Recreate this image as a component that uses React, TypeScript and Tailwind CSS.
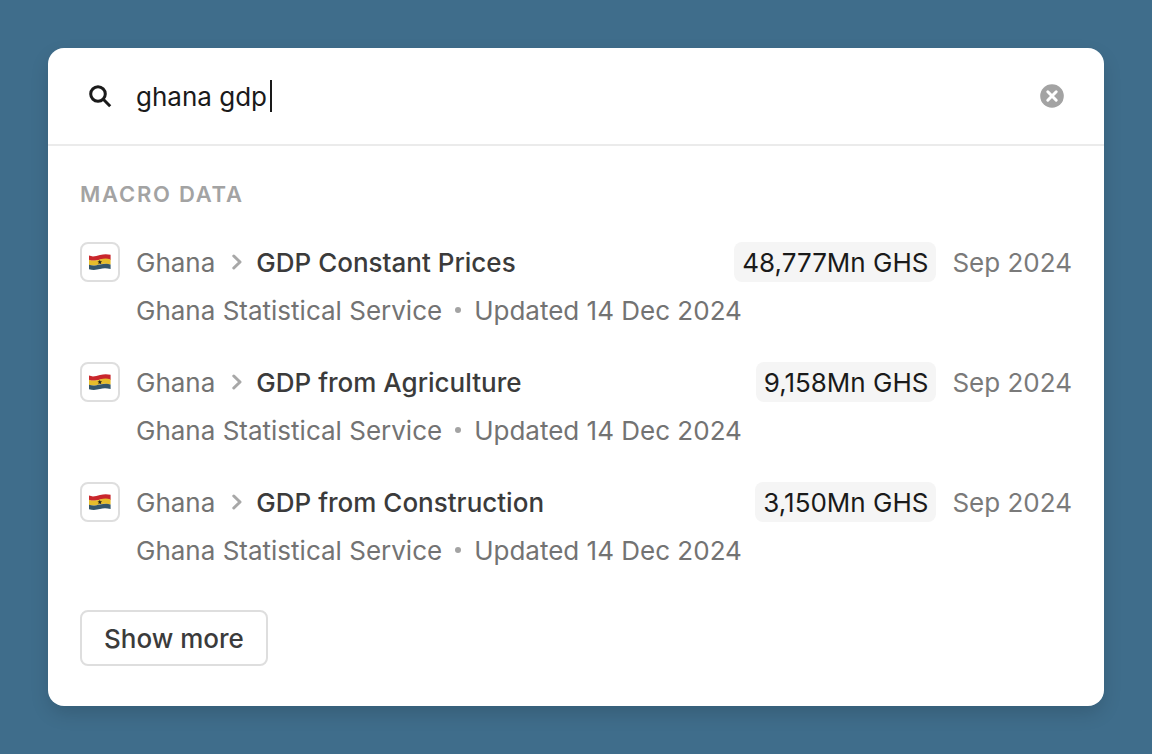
import { useState } from 'react';

interface MacroSeries {
  id: string;
  country: string;
  name: string;
  value: string;
  period: string;
  source: string;
  updated: string;
}

const series: MacroSeries[] = [
  {
    id: 'constant-prices',
    country: 'Ghana',
    name: 'GDP Constant Prices',
    value: '48,777Mn GHS',
    period: 'Sep 2024',
    source: 'Ghana Statistical Service',
    updated: 'Updated 14 Dec 2024'
  },
  {
    id: 'agriculture',
    country: 'Ghana',
    name: 'GDP from Agriculture',
    value: '9,158Mn GHS',
    period: 'Sep 2024',
    source: 'Ghana Statistical Service',
    updated: 'Updated 14 Dec 2024'
  },
  {
    id: 'construction',
    country: 'Ghana',
    name: 'GDP from Construction',
    value: '3,150Mn GHS',
    period: 'Sep 2024',
    source: 'Ghana Statistical Service',
    updated: 'Updated 14 Dec 2024'
  }
];

function SearchIcon() {
  return (
    <svg className="size-6 shrink-0" viewBox="0 0 24 24" fill="none" stroke="#1a1a1a" strokeWidth="3" role="img" aria-label="Search">
      <circle cx="10" cy="10" r="7.3" />
      <path d="M15 15l7.2 7.2" />
    </svg>
  );
}

function ClearIcon() {
  return (
    <svg className="size-6" viewBox="0 0 24 24" aria-hidden="true">
      <circle cx="12" cy="12" r="11.8" fill="#a3a3a3" />
      <path d="M7.8 7.8l8.4 8.4M16.2 7.8l-8.4 8.4" stroke="#fff" strokeWidth="3" strokeLinecap="round" />
    </svg>
  );
}

function ChevronIcon() {
  return (
    <svg className="h-4 w-[10px] shrink-0" viewBox="0 0 10 16" fill="none" stroke="#a8a8a8" strokeWidth="3" strokeLinecap="round" strokeLinejoin="round" aria-hidden="true">
      <path d="M1.8 2L8 8L1.8 14" />
    </svg>
  );
}

function GhanaFlag() {
  return (
    <svg className="h-4 w-[22px]" viewBox="0 0 22 16" aria-hidden="true">
      <path d="M0 1.6C4 3.2 7 2 11 1S18 0 21.6 .8V6C17 4.6 14 5 11 5.8S4 7.4 0 6.2z" fill="#c9262c" />
      <path d="M0 5.7C4 7.2 7 6.4 11 5.4S18 4.3 21.6 5.4V10.6C17 9.4 14 9.8 11 10.6S4 12.2 0 11z" fill="#e6bd2c" />
      <path d="M0 10.7C4 12 7 11.2 11 10.4S18 9.2 21.6 10.4V15C17 14 14 14.2 11 15S4 16.4 0 15.2z" fill="#35566a" />
      <path d="M10.8 5.8l.6 1.5 1.7.1-1.3 1.1.5 1.7-1.5-.9-1.4.9.4-1.7-1.3-1.1 1.7-.1z" fill="#1f1f1f" />
    </svg>
  );
}

function SeriesRow({ item }: { item: MacroSeries }) {
  return (
    <li className="flex gap-4">
      <div className="flex size-10 shrink-0 items-center justify-center rounded-lg border-2 border-[#dedede]">
        <GhanaFlag />
      </div>
      <div className="min-w-0 flex-1 leading-[42px]">
        <div className="flex h-10 justify-between">
          <div className="flex">
            <span className="text-[#737373]">{item.country}</span>
            <span className="flex items-center pr-[14px] pl-[17px]">
              <ChevronIcon />
            </span>
            <a href={`#${item.id}`} className="font-medium text-[#3b3b3b]">
              {item.name}
            </a>
          </div>
          <div className="flex gap-4">
            <span className="h-10 rounded-lg bg-[#f5f5f5] px-2 text-[#1a1a1a]">{item.value}</span>
            <span className="text-[#7a7a7a]">{item.period}</span>
          </div>
        </div>
        <p className="mt-2 flex h-10 gap-[13px] text-[#737373]">
          <span>{item.source}</span>
          <span className="size-[6px] self-center rounded-full bg-[#a3a3a3]" />
          <span>{item.updated}</span>
        </p>
      </div>
    </li>
  );
}

export default function App() {
  const [query, setQuery] = useState('ghana gdp');

  return (
    <div className="min-h-screen bg-[#3f6d8b] p-12 font-['Inter',sans-serif] text-[26px]">
      <main className="rounded-2xl bg-white shadow-[0_8px_20px_-2px_rgba(0,0,0,0.16)]">
        <div className="flex h-[98px] items-center border-b-2 border-[#ebebeb] px-10">
          <label htmlFor="search" className="mr-6">
            <SearchIcon />
          </label>
          <div className="flex min-w-0 flex-1 items-center">
            <input
              id="search"
              type="text"
              value={query}
              onChange={(e) => setQuery(e.target.value)}
              className="field-sizing-content max-w-full pr-[3px] text-[#1a1a1a] caret-transparent outline-none"
            />
            <span className="h-8 w-[2px] shrink-0 bg-[#1a1a1a]" />
          </div>
          <button type="button" aria-label="Clear search" onClick={() => setQuery('')}>
            <ClearIcon />
          </button>
        </div>

        <section className="px-8 pt-8 pb-10">
          <h2 className="text-[22px] leading-8 font-semibold tracking-[0.08em] text-[#a3a3a3] uppercase">Macro data</h2>
          <ul className="mt-8 flex flex-col gap-8">
            {series.map((item) => (
              <SeriesRow key={item.id} item={item} />
            ))}
          </ul>
          <button type="button" className="mt-10 h-14 rounded-lg border-2 border-[#dedede] px-[22px] font-medium text-[#3b3b3b]">
            Show more
          </button>
        </section>
      </main>
    </div>
  );
}
